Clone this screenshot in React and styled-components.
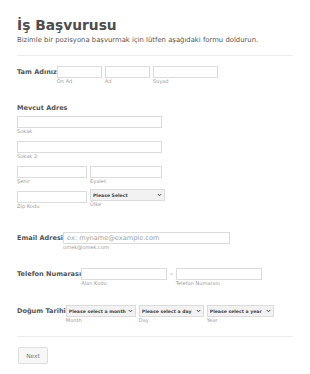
import React from "react";
import styled, { createGlobalStyle } from "styled-components";

const GlobalStyle = createGlobalStyle`
    html, body {
        margin: 0;
        padding: 0;
        background: #ffffff;
    }
    body {
        font-family: "DejaVu Sans", Verdana, sans-serif;
        color: #555555;
    }
`;

const Page = styled.div`
    width: 310px;
    height: 374px;
    box-sizing: border-box;
    padding: 17px 17px 0 17px;
    overflow: hidden;
`;

const Title = styled.h1`
    margin: 0;
    font-size: 13.8px;
    line-height: 17px;
    font-weight: bold;
    color: #4d4d4d;
`;

const Subtitle = styled.p`
    margin: 2px 0 0 0;
    font-size: 6.85px;
    line-height: 8px;
    color: #555555;
`;

const Divider = styled.div`
    height: 1px;
    background: #ececec;
    margin-top: ${p => p.$top || 11}px;
    width: 276px;
`;

const Row = styled.div`
    display: flex;
    align-items: flex-start;
    margin-top: ${p => p.$top || 0}px;
`;

const Label = styled.div`
    font-size: 6.55px;
    font-weight: bold;
    line-height: 8px;
    color: #555555;
    padding-top: 2px;
    white-space: nowrap;
`;

const SectionLabel = styled(Label)`
    padding-top: 0;
    margin-top: ${p => p.$top || 0}px;
    margin-bottom: 4px;
`;

const Fields = styled.div`
    display: flex;
    align-items: flex-start;
    gap: ${p => p.$gap ?? 3}px;
`;

const Field = styled.div`
    display: flex;
    flex-direction: column;
    margin-bottom: ${p => p.$bottom || 0}px;
`;

const Input = styled.input`
    display: block;
    box-sizing: border-box;
    width: ${p => p.$w}px;
    height: 12px;
    margin: 0;
    padding: 0 3px;
    border: 1px solid #dcdcdc;
    border-radius: 0;
    background: #ffffff;
    font-family: inherit;
    font-size: 6.6px;
    color: #555555;
    outline: none;

    &::placeholder {
        color: #a0a0a0;
    }
`;

const Sub = styled.span`
    font-size: 5.1px;
    line-height: 7px;
    color: #9a9a9a;
    white-space: nowrap;
`;

const SelectBox = styled.div`
    position: relative;
    width: ${p => p.$w}px;
    height: 12px;
    margin-top: ${p => p.$top || 0}px;
`;

const Select = styled.select`
    display: block;
    appearance: none;
    box-sizing: border-box;
    width: 100%;
    height: 100%;
    margin: 0;
    padding: 0 0 0 2px;
    border: 1px solid #dcdcdc;
    border-radius: 0;
    background: #f2f2f2;
    font-family: inherit;
    font-size: 4.6px;
    font-weight: bold;
    color: #444444;
    outline: none;
`;

const Chevron = styled.svg`
    position: absolute;
    right: 3px;
    top: 4px;
    width: 5px;
    height: 4px;
    pointer-events: none;
`;

const Dash = styled.span`
    font-size: 7px;
    line-height: 12px;
    color: #777777;
    margin: 0 3px;
`;

const NextButton = styled.button`
    margin: 10px 0 0 1px;
    width: 30px;
    height: 17px;
    padding: 0;
    border: 1px solid #dedede;
    border-radius: 2px;
    background: #f7f7f7;
    font-family: inherit;
    font-size: 5.8px;
    color: #777777;
`;

function Dropdown({ w, text, top }) {
    return (
        <SelectBox $w={w} $top={top}>
            <Select defaultValue="">
                <option value="">{text}</option>
            </Select>
            <Chevron viewBox="0 0 10 8">
                <path d="M1.5 2 L5 5.5 L8.5 2" fill="none" stroke="#444" strokeWidth="2" />
            </Chevron>
        </SelectBox>
    );
}

export default function App() {
    return (
        <>
            <GlobalStyle />
            <Page>
                <Title>İş Başvurusu</Title>
                <Subtitle>Bizimle bir pozisyona başvurmak için lütfen aşağıdaki formu doldurun.</Subtitle>
                <Divider $top={11} />

                <Row $top={10}>
                    <Label>Tam Adınız</Label>
                    <Fields>
                        <Field><Input $w={45} /><Sub>Ön Ad</Sub></Field>
                        <Field><Input $w={45} /><Sub>Ad</Sub></Field>
                        <Field><Input $w={65} /><Sub>Soyad</Sub></Field>
                    </Fields>
                </Row>

                <SectionLabel $top={19}>Mevcut Adres</SectionLabel>
                <Field $bottom={6}><Input $w={145} /><Sub>Sokak</Sub></Field>
                <Field $bottom={6}><Input $w={145} /><Sub>Sokak 2</Sub></Field>
                <Fields>
                    <Field $bottom={6}><Input $w={70} /><Sub>Şehir</Sub></Field>
                    <Field $bottom={6}><Input $w={72} /><Sub>Eyalet</Sub></Field>
                </Fields>
                <Fields>
                    <Field><Input $w={70} /><Sub>Zip Kodu</Sub></Field>
                    <Field>
                        <Dropdown w={75} text="Please Select" top={-2} />
                        <Sub>Ülke</Sub>
                    </Field>
                </Fields>

                <Row $top={22}>
                    <Label>Email Adresi</Label>
                    <Field>
                        <Input $w={167} placeholder="ex: myname@example.com" />
                        <Sub>omek@omek.com</Sub>
                    </Field>
                </Row>

                <Row $top={17}>
                    <Label>Telefon Numarası</Label>
                    <Fields $gap={0}>
                        <Field><Input $w={86} /><Sub>Alan Kodu</Sub></Field>
                        <Dash>-</Dash>
                        <Field><Input $w={86} /><Sub>Telefon Numarası</Sub></Field>
                    </Fields>
                </Row>

                <Row $top={18}>
                    <Label>Doğum Tarihi</Label>
                    <Fields $gap={3}>
                        <Field><Dropdown w={70} text="Please select a month" /><Sub>Month</Sub></Field>
                        <Field><Dropdown w={65} text="Please select a day" /><Sub>Day</Sub></Field>
                        <Field><Dropdown w={67} text="Please select a year" /><Sub>Year</Sub></Field>
                    </Fields>
                </Row>

                <Divider $top={12} />
                <NextButton type="button">Next</NextButton>
            </Page>
        </>
    );
}
